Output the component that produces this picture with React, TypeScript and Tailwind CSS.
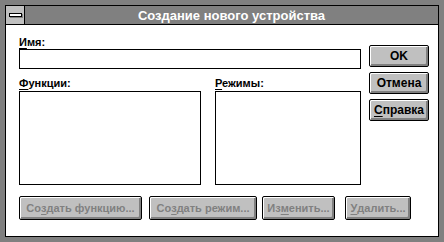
import React from 'react';

const font = "font-['Liberation_Sans',Arial,sans-serif]";

interface BtnProps {
  children: React.ReactNode;
  className?: string;
  disabled?: boolean;
}

const Btn: React.FC<BtnProps> = ({ children, className = '', disabled = false }) => (
  <div
    className={`flex items-center justify-center border border-black rounded-[2px] bg-[#c0c0c0] shadow-[inset_1px_1px_0_#ffffff,inset_-2px_-2px_0_#808080] font-bold leading-none whitespace-nowrap ${
      disabled ? 'text-[#808080]' : 'text-black'
    } ${className}`}
  >
    {children}
  </div>
);

const Key: React.FC<{ children: React.ReactNode }> = ({ children }) => (
  <u className="underline underline-offset-2 decoration-1">{children}</u>
);

export default function App() {
  return (
    <div className={`w-[444px] h-[242px] bg-[#808080] p-[5px] ${font}`}>
      <div className="flex flex-col h-full border border-black">
        {/* Title bar */}
        <div className="flex h-[19px] border-b border-black bg-[#808080]">
          <div className="flex items-center justify-center w-[19px] bg-[#c0c0c0] border-r border-black">
            <div className="w-[13px] h-[4px] bg-white border border-black shadow-[1px_1px_0_#808080]" />
          </div>
          <div className="flex-1 flex items-center justify-center text-white font-bold text-[13px] leading-none">
            Создание нового устройства
          </div>
        </div>

        {/* Body */}
        <div className="flex-1 bg-white pl-[13px] pt-[11px]">
          <div className="flex">
            <div className="w-[342px] flex flex-col">
              <div className="text-[11px] leading-[13px] font-bold text-black">
                <Key>И</Key>мя:
              </div>
              <div className="h-[20px] border border-black bg-white" />

              <div className="flex mt-[8px] gap-[14px]">
                <div className="w-[182px] flex flex-col">
                  <div className="text-[11px] leading-[13px] font-bold text-black mb-[1px]">
                    <Key>Ф</Key>ункции:
                  </div>
                  <div className="h-[94px] border border-black bg-white" />
                </div>
                <div className="w-[146px] flex flex-col">
                  <div className="text-[11px] leading-[13px] font-bold text-black mb-[1px]">
                    <Key>Р</Key>ежимы:
                  </div>
                  <div className="h-[94px] border border-black bg-white" />
                </div>
              </div>
            </div>

            <div className="ml-[8px] mt-[9px] flex flex-col gap-[5px]">
              <Btn className="w-[60px] h-[22px] text-[12px]">OK</Btn>
              <Btn className="w-[60px] h-[22px] text-[12px]">Отмена</Btn>
              <Btn className="w-[60px] h-[22px] text-[12px]">
                <Key>С</Key>правка
              </Btn>
            </div>
          </div>

          <div className="flex mt-[11px] text-[11px]">
            <Btn disabled className="w-[123px] h-[24px]">
              Со<Key>з</Key>дать функцию...
            </Btn>
            <Btn disabled className="ml-[7px] w-[108px] h-[24px]">
              Со<Key>з</Key>дать режим...
            </Btn>
            <Btn disabled className="ml-[5px] w-[73px] h-[24px]">
              Из<Key>м</Key>енить...
            </Btn>
            <Btn disabled className="ml-[10px] w-[66px] h-[24px]">
              <Key>У</Key>далить...
            </Btn>
          </div>
        </div>
      </div>
    </div>
  );
}
